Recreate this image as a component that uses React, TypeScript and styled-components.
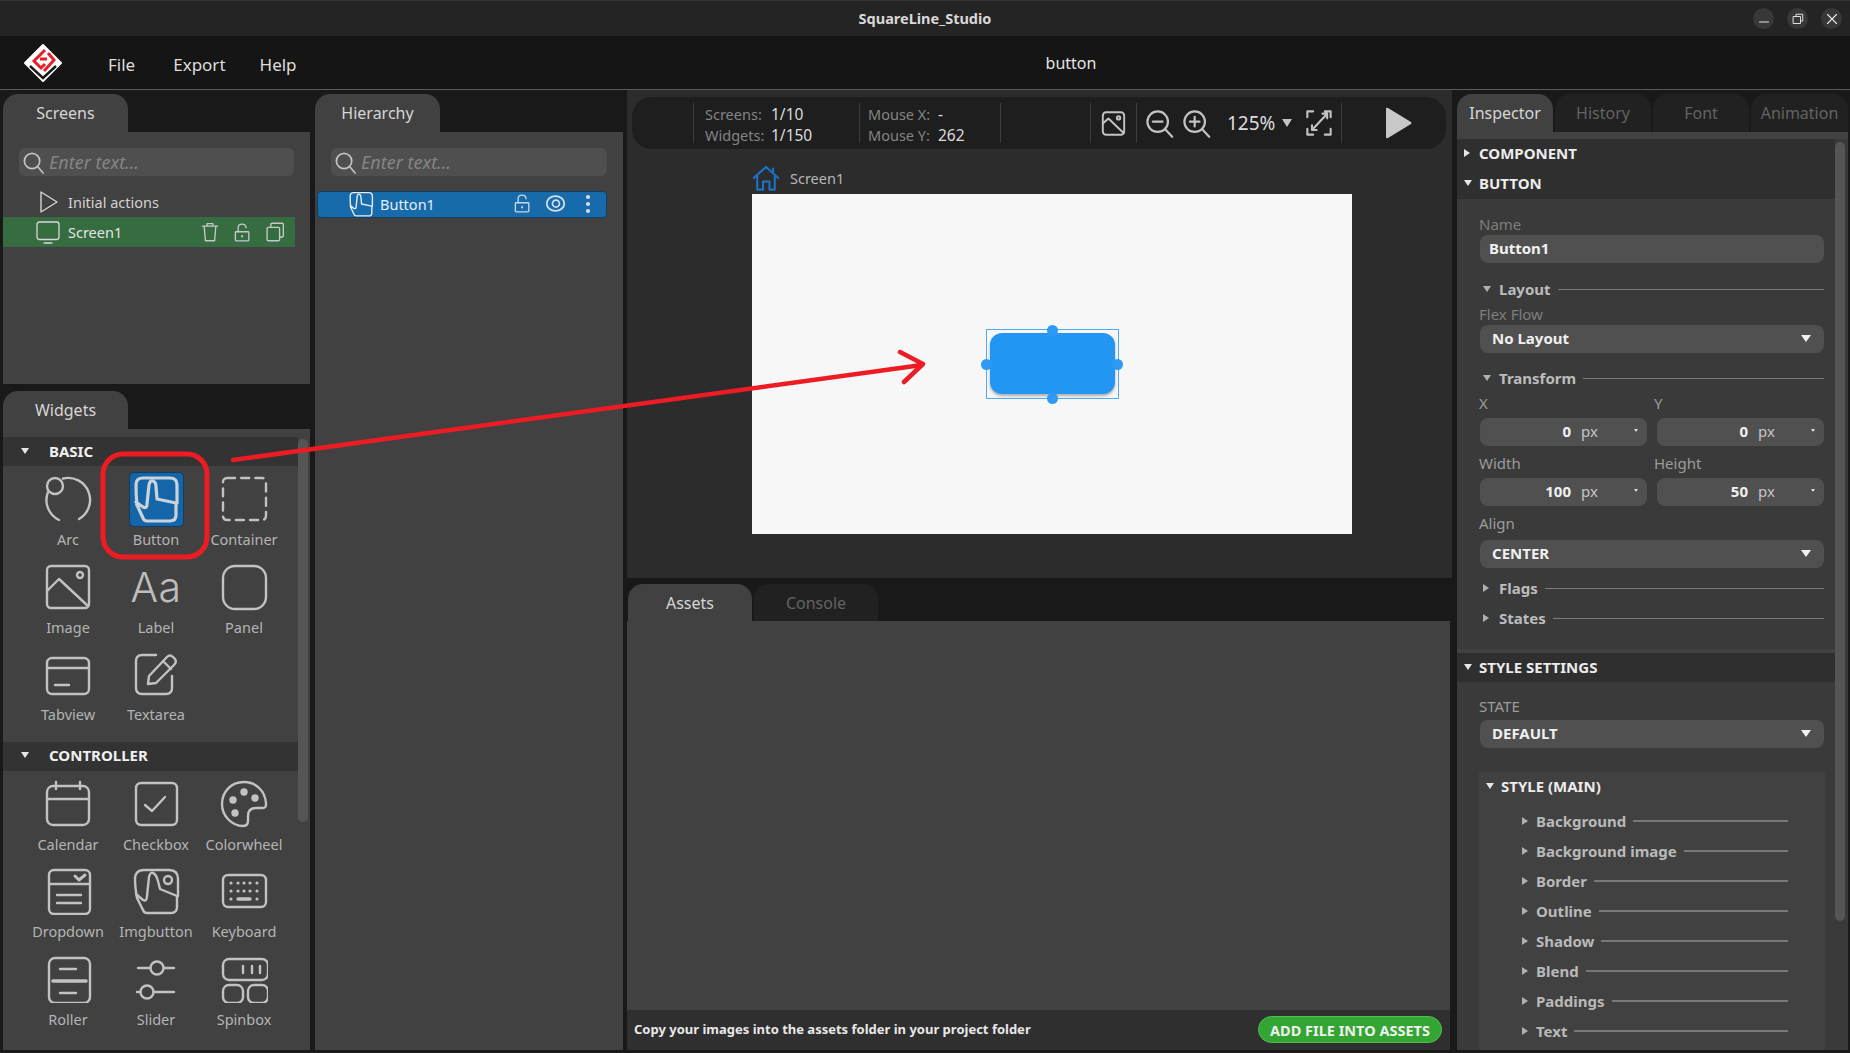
import styled, { createGlobalStyle } from "styled-components";
import type { ReactNode } from "react";

const GlobalStyle = createGlobalStyle`
  html, body {
    margin: 0;
    padding: 0;
    background: #191919;
  }
  * {
    box-sizing: border-box;
  }
  body {
    font-family: "Noto Sans", "Open Sans", sans-serif;
    color: #c8c8c8;
  }
`;

const Page = styled.div`
  position: relative;
  width: 1850px;
  height: 1053px;
  overflow: hidden;
  display: flex;
  flex-direction: column;
  background: #191919;
`;

const TitleBar = styled.div`
  height: 36px;
  display: grid;
  grid-template-columns: 1fr auto 1fr;
  align-items: center;
  background: #242424;
  border-top: 1px solid #333;
`;

const AppTitle = styled.div`
  font-size: 14.5px;
  font-weight: 700;
  color: #d8d8d8;
  padding-bottom: 2px;
`;

const WindowButtons = styled.div`
  display: flex;
  justify-content: flex-end;
  gap: 13px;
  padding-right: 8px;
`;

const WindowButton = styled.div`
  width: 21px;
  height: 21px;
  border-radius: 50%;
  background: #383838;
  display: flex;
  align-items: center;
  justify-content: center;
`;

const MenuBar = styled.div`
  height: 54px;
  display: flex;
  align-items: center;
  background: #151515;
  border-bottom: 1px solid #5a5a5a;
`;

const MenuLeft = styled.div`
  width: 292px;
  flex: none;
  display: flex;
  align-items: center;
  padding-left: 23px;
`;

const LogoMark = styled.svg`
  flex: none;
  display: block;
  margin-top: 2px;
`;

const MenuItem = styled.div<{ $gap: number }>`
  flex: none;
  font-size: 17px;
  color: #dedede;
  padding-top: 3px;
  margin-left: ${(p) => p.$gap}px;
`;

const ProjectName = styled.div`
  flex: 1;
  text-align: center;
  font-size: 16px;
  color: #e4e4e4;
`;

const Main = styled.div`
  flex: 1;
  display: flex;
  padding: 4px 0 3px 3px;
  min-height: 0;
`;

const LeftColumn = styled.div`
  width: 307px;
  display: flex;
  flex-direction: column;
`;

const HierarchyColumn = styled.div`
  width: 308px;
  margin-left: 5px;
  display: flex;
  flex-direction: column;
`;

const CenterColumn = styled.div`
  width: 825px;
  margin: -4px 0 0 4px;
  display: flex;
  flex-direction: column;
`;

const RightColumn = styled.div`
  width: 393px;
  margin-left: 5px;
  display: flex;
  flex-direction: column;
`;

const TabRow = styled.div`
  display: flex;
  height: 38px;
  flex: none;
`;

const Tab = styled.div<{ $active?: boolean; $width: number }>`
  width: ${(p) => p.$width}px;
  margin-right: 2px;
  border-radius: 15px 15px 0 0;
  display: flex;
  align-items: center;
  justify-content: center;
  font-size: 16px;
  background: ${(p) => (p.$active ? "#414141" : "#212121")};
  color: ${(p) => (p.$active ? "#d6d6d6" : "#636363")};
`;

const ScreensBody = styled.div`
  height: 252px;
  background: #414141;
  padding-top: 16px;
`;

const HierarchyBody = styled.div`
  flex: 1;
  background: #414141;
  padding-top: 16px;
`;

const Search = styled.div<{ $left: number; $width: number }>`
  margin-left: ${(p) => p.$left}px;
  width: ${(p) => p.$width}px;
  height: 28px;
  border-radius: 6px;
  background: #4f4f4f;
  display: flex;
  align-items: center;
  padding-left: 3px;
  gap: 4px;
  font-size: 18px;
  font-style: italic;
  color: #858585;
`;

const ListRow = styled.div<{ $selected?: boolean }>`
  height: 30px;
  width: 292px;
  display: flex;
  align-items: center;
  padding-left: 33px;
  font-size: 14.5px;
  background: ${(p) => (p.$selected ? "#366d40" : "transparent")};
  color: ${(p) => (p.$selected ? "#e4e4e4" : "#d2d2d2")};
`;

const ListIcon = styled.div`
  width: 32px;
  flex: none;
  display: flex;
  align-items: center;
`;

const RowActions = styled.div`
  margin-left: auto;
  display: flex;
  align-items: center;
  gap: 13px;
  padding-right: 10px;
`;

const ListSpacer = styled.div`
  height: 11px;
`;

const HierarchyRow = styled.div`
  margin: 15px 0 0 2px;
  width: 290px;
  height: 27px;
  display: flex;
  align-items: center;
  padding: 0 0 2px 30px;
  border-radius: 4px;
  border: 1px solid #123f66;
  background: #186bab;
  font-size: 14.5px;
  color: #e6eef5;
`;

const HierarchyActions = styled.div`
  margin-left: auto;
  display: flex;
  align-items: center;
  gap: 13px;
  padding-right: 15px;
`;

const DotsSlot = styled.div`
  margin-left: 6px;
`;

const WidgetsTabs = styled(TabRow)`
  margin-top: 7px;
`;

const WidgetsBody = styled.div`
  flex: 1;
  display: flex;
  background: #414141;
  padding-top: 8px;
  min-height: 0;
`;

const WidgetsList = styled.div`
  width: 295px;
`;

const Scrollbar = styled.div`
  width: 12px;
  padding-top: 2px;
`;

const ScrollThumb = styled.div<{ $height: number }>`
  width: 10px;
  height: ${(p) => p.$height}px;
  border-radius: 5px;
  background: #555;
`;

const Triangle = styled.span<{ $open?: boolean; $size?: number; $color?: string }>`
  display: inline-block;
  flex: none;
  width: 0;
  height: 0;
  ${(p) => {
    const s = p.$size ?? 4;
    const c = p.$color ?? "#e6e6e6";
    return p.$open
      ? `border-left: ${s}px solid transparent; border-right: ${s}px solid transparent; border-top: ${s * 1.5}px solid ${c};`
      : `border-top: ${s}px solid transparent; border-bottom: ${s}px solid transparent; border-left: ${s * 1.5}px solid ${c};`;
  }}
`;

const TriSlot = styled.div<{ $width: number }>`
  width: ${(p) => p.$width}px;
  flex: none;
  display: flex;
  align-items: center;
`;

const WidgetHeader = styled.div`
  height: 29px;
  display: flex;
  align-items: center;
  background: #333;
  padding: 0 0 2px 18px;
  font-size: 15px;
  font-weight: 700;
  color: #f0f0f0;
`;

const WidgetGrid = styled.div`
  display: grid;
  grid-template-columns: repeat(3, 88px);
  grid-auto-rows: 87.5px;
  padding: 9px 0 4px 21px;
`;

const WidgetCell = styled.div`
  display: flex;
  flex-direction: column;
  align-items: center;
`;

const WidgetIcon = styled.div`
  width: 48px;
  height: 48px;
  display: flex;
  align-items: center;
  justify-content: center;
`;

const ActiveTile = styled.div`
  width: 55px;
  height: 55px;
  flex: none;
  border-radius: 5px;
  border: 1px solid #113d63;
  background: #1565a9;
  display: flex;
  align-items: center;
  justify-content: center;
`;

const BigLetters = styled.div`
  font-family: "Inter", "Roboto", sans-serif;
  font-size: 41px;
  font-weight: 300;
  line-height: 48px;
  letter-spacing: 0.5px;
  color: #bdbdbd;
`;

const WidgetLabel = styled.div`
  margin-top: 6px;
  line-height: 20px;
  font-size: 14.5px;
  color: #b4b4b4;
  white-space: nowrap;
`;

const Workspace = styled.div`
  height: 488px;
  flex: none;
  background: #2c2c2c;
  padding: 7px 6px 0 5px;
`;

const Toolbar = styled.div`
  height: 52px;
  border-radius: 20px;
  background: #1e1e1e;
  display: flex;
  align-items: center;
`;

const ToolSection = styled.div<{ $width: number; $first?: boolean }>`
  width: ${(p) => p.$width}px;
  height: 40px;
  flex: none;
  display: flex;
  align-items: center;
  border-left: ${(p) => (p.$first ? "none" : "1px solid #3c3c3c")};
`;

const CenteredSection = styled(ToolSection)`
  justify-content: center;
`;

const ZoomSection = styled(ToolSection)`
  padding-left: 8px;
  gap: 8px;
`;

const PlaySection = styled(ToolSection)`
  padding-left: 42px;
`;

const StatSection = styled(ToolSection)`
  flex-direction: column;
  align-items: flex-start;
  justify-content: center;
  padding: 3px 0 0 ${(p) => (p.$width > 150 ? 11 : 8)}px;
`;

const StatLine = styled.div`
  display: flex;
  align-items: baseline;
  line-height: 21px;
  font-size: 14.5px;
`;

const StatLabel = styled.span<{ $width: number }>`
  width: ${(p) => p.$width}px;
  color: #848484;
`;

const StatValue = styled.span`
  font-size: 15.5px;
  color: #dcdcdc;
`;

const ZoomText = styled.span`
  font-size: 19px;
  color: #dcdcdc;
  margin: 0 -1px 0 8px;
`;

const ZoomCaret = styled.div`
  display: flex;
  margin-right: 5px;
`;

const ScreenHeader = styled.div`
  display: flex;
  align-items: center;
  height: 26px;
  margin: 15px 0 0 120px;
  gap: 10px;
  font-size: 14.5px;
  color: #b8b8b8;
  padding-top: 1px;
`;

const Canvas = styled.div`
  width: 600px;
  height: 340px;
  margin: 4px 0 0 120px;
  background: #f7f7f7;
  display: flex;
  align-items: center;
  justify-content: center;
`;

const Selection = styled.div`
  position: relative;
  width: 133px;
  height: 70px;
  padding: 3px 3px 4px;
  border: 1.5px solid #4ea9f6;
`;

const CanvasButton = styled.div`
  width: 100%;
  height: 100%;
  border-radius: 12px;
  background: #2196f3;
  box-shadow: 0 2px 3px rgba(0, 0, 0, 0.3);
`;

const Handle = styled.div<{ $x: string; $y: string }>`
  position: absolute;
  left: ${(p) => p.$x};
  top: ${(p) => p.$y};
  width: 11px;
  height: 11px;
  margin: -5.5px 0 0 -5.5px;
  border-radius: 50%;
  background: #2e9af5;
`;

const AssetTabs = styled(TabRow)`
  padding: 6px 0 0 1px;
  height: 43px;
`;

const AssetBody = styled.div`
  flex: 1;
  width: 823px;
  display: flex;
  flex-direction: column;
  background: #414141;
`;

const AssetContent = styled.div`
  flex: 1;
`;

const AssetFooter = styled.div`
  height: 40px;
  background: #2f2f2f;
  display: flex;
  align-items: center;
  justify-content: space-between;
  padding: 0 8px 0 7px;
  font-size: 13px;
  font-weight: 700;
  color: #e8e8e8;
`;

const FooterText = styled.div`
  margin-top: -2px;
`;

const GreenButton = styled.div`
  width: 184px;
  height: 27px;
  margin-top: -1px;
  border-radius: 14px;
  border: 1px solid #4ec14d;
  background: #33a532;
  display: flex;
  align-items: center;
  justify-content: center;
  font-size: 14.5px;
  color: #f0f0f0;
`;

const InspectorTabs = styled(TabRow)`
  width: 393px;
`;

const InspectorBody = styled.div`
  flex: 1;
  width: 391px;
  display: flex;
  padding-top: 7px;
  background: #414141;
  min-height: 0;
`;

const InspectorScroll = styled.div`
  width: 378px;
  background: #3a3a3a;
  overflow: hidden;
`;

const InspectorTrack = styled.div`
  width: 13px;
  padding-top: 3px;
  background: #3a3a3a;
`;

const SectionHeader = styled.div<{ $height?: number }>`
  height: ${(p) => p.$height ?? 30}px;
  display: flex;
  align-items: center;
  padding: 0 0 2px 7px;
  background: #2f2f2f;
  font-size: 15px;
  font-weight: 700;
  color: #ececec;
`;

const SectionBand = styled.div`
  margin-top: 20px;
  border-top: 4px solid #414141;
`;

const Form = styled.div`
  padding: 0 11px 0 22px;
`;

const FieldLabel = styled.div<{ $top: number; $dim?: boolean }>`
  margin-top: ${(p) => p.$top}px;
  height: 20px;
  line-height: 18px;
  font-size: 15px;
  color: ${(p) => (p.$dim ? "#7e7e7e" : "#9c9c9c")};
`;

const TextField = styled.div<{ $top?: number }>`
  margin: ${(p) => p.$top ?? 0}px 0 0 1px;
  height: 28px;
  border-radius: 8px;
  background: #505050;
  display: flex;
  align-items: center;
  padding: 0 0 2px 9px;
  font-size: 15px;
  font-weight: 700;
  color: #f0f0f0;
`;

const SelectField = styled(TextField)`
  justify-content: space-between;
  padding: 0 13px 2px 12px;
`;

const SubHeader = styled.div<{ $top: number }>`
  margin: ${(p) => p.$top}px 0 0 4px;
  height: 20px;
  display: flex;
  align-items: center;
  padding-bottom: 2px;
  font-size: 15px;
  font-weight: 700;
  color: #bcbcbc;
`;

const Rule = styled.div<{ $thick?: boolean }>`
  flex: 1;
  height: ${(p) => (p.$thick ? 2 : 1)}px;
  margin-left: 7px;
  background: ${(p) => (p.$thick ? "#787878" : "#7a7a7a")};
`;

const TwoColumns = styled.div`
  display: grid;
  grid-template-columns: 167px 167px;
  column-gap: 10px;
  margin-left: 1px;
`;

const ColumnLabels = styled(TwoColumns)`
  margin-left: 0;
  column-gap: 9px;
  grid-template-columns: 166px 170px;
`;

const NumberField = styled.div<{ $top: number }>`
  margin-top: ${(p) => p.$top}px;
  height: 28px;
  border-radius: 8px;
  background: #505050;
  display: flex;
  align-items: center;
  padding-bottom: 2px;
  font-size: 15px;
`;

const NumberValue = styled.span`
  width: 91px;
  text-align: right;
  font-weight: 700;
  color: #f0f0f0;
`;

const NumberUnit = styled.span`
  margin-left: 10px;
  color: #c4c4c4;
`;

const NumberCaret = styled.span`
  margin-left: auto;
  margin-right: 9px;
  margin-top: -2px;
  display: flex;
`;

const StyleBox = styled.div`
  margin: 24px 10px 0 22px;
  height: 278px;
  background: #414141;
  padding-top: 5px;
`;

const StyleTitle = styled.div`
  height: 20px;
  display: flex;
  align-items: center;
  padding: 0 0 2px 7px;
  font-size: 15px;
  font-weight: 700;
  color: #ececec;
`;

const StyleItem = styled.div`
  height: 30px;
  display: flex;
  align-items: center;
  margin: 0 37px 0 43px;
  padding-bottom: 2px;
  font-size: 15px;
  font-weight: 700;
  color: #b9b9b9;
`;

const StyleItems = styled.div`
  margin-top: 10px;
`;

const AnnotationLayer = styled.svg`
  position: absolute;
  left: 0;
  top: 0;
  pointer-events: none;
`;

const Line = styled.svg`
  display: block;
  flex: none;
  fill: none;
  stroke: ${(p) => p.color ?? "#c2c2c2"};
  stroke-linecap: round;
  stroke-linejoin: round;
`;

type IconProps = {
  size?: number;
  color?: string;
  stroke?: number;
  children: ReactNode;
};

const Icon = ({ size = 48, color, stroke = 2.4, children }: IconProps) => (
  <Line
    width={size}
    height={size}
    viewBox="0 0 48 48"
    color={color}
    style={{ strokeWidth: stroke }}
  >
    {children}
  </Line>
);

const handPath =
  "M4 27 L11 32 Q15 34 15 29 L17 10 Q18 5 21 6 Q24 7 24 12 L25 24 L44 28 V40 Q44 46 38 46 H15 Q12 46 11 43 L5 30";

const ArcIcon = (
  <>
    <circle cx="11" cy="11" r="8" />
    <path d="M19 3.5 A22 22 0 0 1 35 44" />
    <path d="M4 17 A22 22 0 0 0 15 45" />
  </>
);

const ButtonIcon = (
  <>
    <path d="M5 30 Q4 20 4 10 Q4 3 11 3 H38 Q45 3 45 10 V28" />
    <path d={handPath} />
  </>
);

const ContainerIcon = (
  <rect x="3" y="3" width="43" height="42" rx="4" strokeDasharray="8 6.2" />
);

const ImageIcon = (
  <>
    <rect x="3" y="3" width="42" height="42" rx="4" />
    <path d="M3 28 L15 16 L44 43" />
    <circle cx="36" cy="12" r="3" />
  </>
);

const PanelIcon = <rect x="3" y="3" width="43" height="43" rx="12" />;

const TabviewIcon = (
  <>
    <rect x="3" y="8" width="42" height="36" rx="5" />
    <path d="M3 18 H45 M11 35 H25" />
  </>
);

const TextareaIcon = (
  <>
    <path d="M24 5 H10 Q4 5 4 11 V38 Q4 44 10 44 H34 Q40 44 40 38 V26" />
    <path d="M16 34 L17 26 L35 7 Q38 4 41 7 L43 9 Q45 12 42 15 L24 33 Z M31 11 L39 19" />
  </>
);

const CalendarIcon = (
  <>
    <rect x="3" y="6" width="42" height="39" rx="6" />
    <path d="M3 19 H45 M12 2 V9 M36 2 V9" />
  </>
);

const CheckboxIcon = (
  <>
    <rect x="4" y="3" width="41" height="42" rx="5" />
    <path d="M13 25 L20 31 L33 17" />
  </>
);

const ColorwheelIcon = (
  <>
    <path d="M24 2 C10 2 2 13 2 24 C2 36 12 46 23 46 C29 46 28 41 28 36 C28 31 31 28 36 28 H43 C46 28 46 26 46 23 C45 11 36 2 24 2 Z" />
    <circle cx="13" cy="20" r="2.5" fill="#c2c2c2" />
    <circle cx="24" cy="12" r="2.5" fill="#c2c2c2" />
    <circle cx="35" cy="18" r="2.5" fill="#c2c2c2" />
    <circle cx="15" cy="33" r="2.5" fill="#c2c2c2" />
  </>
);

const DropdownIcon = (
  <>
    <rect x="5" y="3" width="41" height="44" rx="5" />
    <path d="M5 17 H46 M13 28 H37 M13 36 H37" />
    <path d="M31 9 L35 13 L41 8" strokeWidth="3" />
  </>
);

const ImgbuttonIcon = (
  <>
    <path d="M5 31 Q3 20 3 12 Q3 3 12 3 H37 Q46 3 46 12 V29" />
    <path d="M4 27 L11 33 Q15 35 15 29 L17 10 Q18 5 21 6 Q24 7 26 14 L28 22 L45 29 V40 Q45 46 39 46 H15 Q12 46 11 43 L5 31" />
    <circle cx="36" cy="13" r="4" />
  </>
);

const KeyboardIcon = (
  <>
    <rect x="3" y="8" width="43" height="32" rx="5" />
    <path
      d="M11 16 V16 M18 16 V16 M24 16 V16 M30 16 V16 M37 16 V16 M11 24 V24 M18 24 V24 M24 24 V24 M30 24 V24 M37 24 V24 M11 32 V32 M37 32 V32"
      strokeWidth="3.2"
    />
    <path d="M18 32 H30" strokeWidth="3.4" />
  </>
);

const RollerIcon = (
  <>
    <rect x="5" y="3" width="41" height="45" rx="6" />
    <path d="M16 14 H32 M16 38 H32" />
    <path d="M9 26 H42" strokeWidth="3.6" />
  </>
);

const SliderIcon = (
  <>
    <circle cx="25" cy="13" r="6.5" />
    <circle cx="15" cy="37" r="6.5" />
    <path d="M6 13 H18 M32 13 H42 M5 37 H8 M22 37 H42" />
  </>
);

const SpinboxIcon = (
  <>
    <rect x="3" y="4" width="45" height="21" rx="6" />
    <rect x="3" y="30" width="20" height="18" rx="6" />
    <rect x="28" y="30" width="20" height="18" rx="6" />
    <path d="M23 11 V18 M32 11 V18 M40 11 V18" />
  </>
);

const SearchIcon = () => (
  <Icon size={23} stroke={3.6}>
    <circle cx="21" cy="21" r="16" />
    <path d="M33 33 L44 46" />
  </Icon>
);

const UnlockIcon = ({ size = 19, color = "#c8c8c8" }: { size?: number; color?: string }) => (
  <Icon size={size} stroke={3.4} color={color}>
    <rect x="6" y="22" width="34" height="23" rx="2" />
    <path d="M13 22 V12 Q13 3 23 3 Q32 3 33 12" />
    <path d="M23 33 V34" strokeWidth="5" />
  </Icon>
);

const TrashIcon = () => (
  <Icon size={20} stroke={3.2} color="#c8c8c8">
    <path d="M6 10 H42 M17 10 V4 H31 V10 M10 10 L13 45 H35 L38 10" />
  </Icon>
);

const CopyIcon = () => (
  <Icon size={20} stroke={3.2} color="#c8c8c8">
    <rect x="5" y="13" width="30" height="32" rx="3" />
    <path d="M14 12 V6 Q14 3 17 3 H41 Q44 3 44 6 V33 Q44 36 41 36 H36" />
  </Icon>
);

const EyeIcon = () => (
  <Icon size={21} stroke={4} color="#d4dfe8">
    <ellipse cx="24" cy="24" rx="20" ry="17" />
    <circle cx="25" cy="24" r="8" />
  </Icon>
);

const DotsIcon = () => (
  <Line width={6} height={20} viewBox="0 0 6 20" style={{ stroke: "none" }}>
    <circle cx="3" cy="3" r="2.1" fill="#d4dfe8" />
    <circle cx="3" cy="10" r="2.1" fill="#d4dfe8" />
    <circle cx="3" cy="17" r="2.1" fill="#d4dfe8" />
  </Line>
);

const Logo = () => (
  <LogoMark width="40" height="42" viewBox="0 0 40 42">
    <path d="M20 2 L38 20 L20 38 L2 20 Z" fill="#fff" stroke="#fff" strokeWidth="2" strokeLinejoin="round" />
    <path d="M7 23 L20 35 L33 23" fill="none" stroke="#1a1a1a" strokeWidth="2.4" />
    <path
      d="M22 7 L11 18 L18 25 L22 21 M17 16 H24 M25 10 L31 17 L21 28"
      fill="none"
      stroke="#e3202a"
      strokeWidth="3"
    />
  </LogoMark>
);

type WidgetDef = { label: string; icon?: ReactNode; active?: boolean; letters?: boolean };

const basicWidgets: WidgetDef[] = [
  { label: "Arc", icon: ArcIcon },
  { label: "Button", icon: ButtonIcon, active: true },
  { label: "Container", icon: ContainerIcon },
  { label: "Image", icon: ImageIcon },
  { label: "Label", letters: true },
  { label: "Panel", icon: PanelIcon },
  { label: "Tabview", icon: TabviewIcon },
  { label: "Textarea", icon: TextareaIcon },
];

const controllerWidgets: WidgetDef[] = [
  { label: "Calendar", icon: CalendarIcon },
  { label: "Checkbox", icon: CheckboxIcon },
  { label: "Colorwheel", icon: ColorwheelIcon },
  { label: "Dropdown", icon: DropdownIcon },
  { label: "Imgbutton", icon: ImgbuttonIcon },
  { label: "Keyboard", icon: KeyboardIcon },
  { label: "Roller", icon: RollerIcon },
  { label: "Slider", icon: SliderIcon },
  { label: "Spinbox", icon: SpinboxIcon },
];

const styleItems = [
  "Background",
  "Background image",
  "Border",
  "Outline",
  "Shadow",
  "Blend",
  "Paddings",
  "Text",
];

const WidgetTile = ({ widget }: { widget: WidgetDef }) => (
  <WidgetCell>
    <WidgetIcon>
      {widget.letters && <BigLetters>Aa</BigLetters>}
      {widget.icon && !widget.active && <Icon>{widget.icon}</Icon>}
      {widget.active && (
        <ActiveTile>
          <Icon stroke={3.2} color="#c9d3dc">
            {widget.icon}
          </Icon>
        </ActiveTile>
      )}
    </WidgetIcon>
    <WidgetLabel>{widget.label}</WidgetLabel>
  </WidgetCell>
);

const FoldRow = ({ label, top, open }: { label: string; top: number; open?: boolean }) => (
  <SubHeader $top={top}>
    <TriSlot $width={16}>
      <Triangle $open={open} $color="#b0b0b0" />
    </TriSlot>
    <div>{label}</div>
    <Rule />
  </SubHeader>
);

const PxField = ({ value, top }: { value: number; top: number }) => (
  <NumberField $top={top}>
    <NumberValue>{value}</NumberValue>
    <NumberUnit>px</NumberUnit>
    <NumberCaret>
      <Triangle $open $size={2.5} $color="#ddd" />
    </NumberCaret>
  </NumberField>
);

const Select = ({ value, top }: { value: string; top?: number }) => (
  <SelectField $top={top}>
    {value}
    <Triangle $open $size={5} $color="#f0f0f0" />
  </SelectField>
);

const WidgetSection = ({ title, widgets }: { title: string; widgets: WidgetDef[] }) => (
  <>
    <WidgetHeader>
      <TriSlot $width={28}>
        <Triangle $open $size={4.5} />
      </TriSlot>
      <div>{title}</div>
    </WidgetHeader>
    <WidgetGrid>
      {widgets.map((w) => (
        <WidgetTile key={w.label} widget={w} />
      ))}
    </WidgetGrid>
  </>
);

export default function App() {
  return (
    <Page>
      <GlobalStyle />
      <TitleBar>
        <div />
        <AppTitle>SquareLine_Studio</AppTitle>
        <WindowButtons>
          <WindowButton>
            <Icon size={12} stroke={4} color="#e0e0e0">
              <path d="M6 36 H42" />
            </Icon>
          </WindowButton>
          <WindowButton>
            <Icon size={12} stroke={4} color="#e0e0e0">
              <rect x="6" y="14" width="28" height="28" />
              <path d="M16 14 V5 H43 V32 H34" />
            </Icon>
          </WindowButton>
          <WindowButton>
            <Icon size={12} stroke={4.5} color="#e8e8e8">
              <path d="M6 6 L42 42 M42 6 L6 42" />
            </Icon>
          </WindowButton>
        </WindowButtons>
      </TitleBar>
      <MenuBar>
        <MenuLeft>
          <Logo />
          <MenuItem $gap={45}>File</MenuItem>
          <MenuItem $gap={38}>Export</MenuItem>
          <MenuItem $gap={34}>Help</MenuItem>
        </MenuLeft>
        <ProjectName>button</ProjectName>
      </MenuBar>
      <Main>
        <LeftColumn>
          <TabRow>
            <Tab $active $width={125}>
              Screens
            </Tab>
          </TabRow>
          <ScreensBody>
            <Search $left={16} $width={275}>
              <SearchIcon />
              Enter text...
            </Search>
            <ListSpacer />
            <ListRow>
              <ListIcon>
                <Icon size={24} stroke={2.8} color="#d4d4d4">
                  <path d="M10 4 L42 24 L10 44 Z" />
                </Icon>
              </ListIcon>
              Initial actions
            </ListRow>
            <ListRow $selected>
              <ListIcon>
                <Icon size={24} stroke={2.6} color="#d8d8d8">
                  <rect x="2" y="4" width="44" height="35" rx="5" />
                  <path d="M16 46 H32" />
                </Icon>
              </ListIcon>
              Screen1
              <RowActions>
                <TrashIcon />
                <UnlockIcon />
                <CopyIcon />
              </RowActions>
            </ListRow>
          </ScreensBody>
          <WidgetsTabs>
            <Tab $active $width={125}>
              Widgets
            </Tab>
          </WidgetsTabs>
          <WidgetsBody>
            <WidgetsList>
              <WidgetSection title="BASIC" widgets={basicWidgets} />
              <WidgetSection title="CONTROLLER" widgets={controllerWidgets} />
            </WidgetsList>
            <Scrollbar>
              <ScrollThumb $height={383} />
            </Scrollbar>
          </WidgetsBody>
        </LeftColumn>
        <HierarchyColumn>
          <TabRow>
            <Tab $active $width={125}>
              Hierarchy
            </Tab>
          </TabRow>
          <HierarchyBody>
            <Search $left={16} $width={276}>
              <SearchIcon />
              Enter text...
            </Search>
            <HierarchyRow>
              <ListIcon>
                <Icon size={26} stroke={2.6} color="#e2ebf3">
                  {ButtonIcon}
                </Icon>
              </ListIcon>
              Button1
              <HierarchyActions>
                <UnlockIcon color="#c9d6e2" />
                <EyeIcon />
                <DotsSlot>
                  <DotsIcon />
                </DotsSlot>
              </HierarchyActions>
            </HierarchyRow>
          </HierarchyBody>
        </HierarchyColumn>
        <CenterColumn>
          <Workspace>
            <Toolbar>
              <ToolSection $first $width={61} />
              <StatSection $width={166}>
                <StatLine>
                  <StatLabel $width={66}>Screens:</StatLabel>
                  <StatValue>1/10</StatValue>
                </StatLine>
                <StatLine>
                  <StatLabel $width={66}>Widgets:</StatLabel>
                  <StatValue>1/150</StatValue>
                </StatLine>
              </StatSection>
              <StatSection $width={141}>
                <StatLine>
                  <StatLabel $width={70}>Mouse X:</StatLabel>
                  <StatValue>-</StatValue>
                </StatLine>
                <StatLine>
                  <StatLabel $width={70}>Mouse Y:</StatLabel>
                  <StatValue>262</StatValue>
                </StatLine>
              </StatSection>
              <ToolSection $width={90} />
              <CenteredSection $width={46}>
                <Icon size={27} stroke={3.4} color="#c4c4c4">
                  <rect x="5" y="4" width="38" height="40" rx="6" />
                  <path d="M5 24 L15 15 L42 41" />
                  <circle cx="33" cy="14" r="3" />
                </Icon>
              </CenteredSection>
              <ZoomSection $width={205}>
                <Icon size={29} stroke={3.6}>
                  <circle cx="21" cy="21" r="17" />
                  <path d="M33 33 L45 46 M13 21 H29" />
                </Icon>
                <Icon size={29} stroke={3.6}>
                  <circle cx="21" cy="21" r="17" />
                  <path d="M33 33 L45 46 M13 21 H29 M21 13 V29" />
                </Icon>
                <ZoomText>125%</ZoomText>
                <ZoomCaret>
                  <Triangle $open $size={5.5} $color="#c4c4c4" />
                </ZoomCaret>
                <Icon size={28} stroke={3.6}>
                  <path d="M14 4 H4 V14 M34 4 H44 V14 M14 44 H4 V34 M34 44 H44 V34 M12 36 L38 8 M38 8 H30 M38 8 V16 M12 36 H20 M12 36 V28" />
                </Icon>
              </ZoomSection>
              <PlaySection $width={104}>
                <Line width={28} height={32} viewBox="0 0 28 32" style={{ stroke: "none" }}>
                  <path
                    d="M2 2 Q2 0 4 1 L27 15 Q28 16 27 17 L4 31 Q2 32 2 30 Z"
                    fill="#c8c8c8"
                  />
                </Line>
              </PlaySection>
            </Toolbar>
            <ScreenHeader>
              <Icon size={28} stroke={3.6} color="#1a73c8">
                <path d="M3 24 L24 5 L45 24 M9 20 V44 H19 V30 H30 V44 H39 V20 M36 8 V14" />
              </Icon>
              Screen1
            </ScreenHeader>
            <Canvas>
              <Selection>
                <CanvasButton />
                <Handle $x="50%" $y="0%" />
                <Handle $x="50%" $y="100%" />
                <Handle $x="0%" $y="50%" />
                <Handle $x="100%" $y="50%" />
              </Selection>
            </Canvas>
          </Workspace>
          <AssetTabs>
            <Tab $active $width={124}>
              Assets
            </Tab>
            <Tab $width={124}>Console</Tab>
          </AssetTabs>
          <AssetBody>
            <AssetContent />
            <AssetFooter>
              <FooterText>Copy your images into the assets folder in your project folder</FooterText>
              <GreenButton>ADD FILE INTO ASSETS</GreenButton>
            </AssetFooter>
          </AssetBody>
        </CenterColumn>
        <RightColumn>
          <InspectorTabs>
            <Tab $active $width={96}>
              Inspector
            </Tab>
            <Tab $width={96}>History</Tab>
            <Tab $width={96}>Font</Tab>
            <Tab $width={97}>Animation</Tab>
          </InspectorTabs>
          <InspectorBody>
            <InspectorScroll>
              <SectionHeader>
                <TriSlot $width={15}>
                  <Triangle />
                </TriSlot>
                COMPONENT
              </SectionHeader>
              <SectionHeader>
                <TriSlot $width={15}>
                  <Triangle $open />
                </TriSlot>
                BUTTON
              </SectionHeader>
              <Form>
                <FieldLabel $top={16} $dim>
                  Name
                </FieldLabel>
                <TextField>Button1</TextField>
                <FoldRow label="Layout" top={17} open />
                <FieldLabel $top={5} $dim>
                  Flex Flow
                </FieldLabel>
                <Select value="No Layout" />
                <FoldRow label="Transform" top={16} open />
                <ColumnLabels>
                  <FieldLabel $top={5}>X</FieldLabel>
                  <FieldLabel $top={5}>Y</FieldLabel>
                </ColumnLabels>
                <TwoColumns>
                  <PxField value={0} top={4} />
                  <PxField value={0} top={4} />
                </TwoColumns>
                <ColumnLabels>
                  <FieldLabel $top={8}>Width</FieldLabel>
                  <FieldLabel $top={8}>Height</FieldLabel>
                </ColumnLabels>
                <TwoColumns>
                  <PxField value={100} top={4} />
                  <PxField value={50} top={4} />
                </TwoColumns>
                <FieldLabel $top={8}>Align</FieldLabel>
                <Select value="CENTER" top={6} />
                <FoldRow label="Flags" top={11} />
                <FoldRow label="States" top={10} />
              </Form>
              <SectionBand>
                <SectionHeader $height={29}>
                  <TriSlot $width={15}>
                    <Triangle $open />
                  </TriSlot>
                  STYLE SETTINGS
                </SectionHeader>
              </SectionBand>
              <Form>
                <FieldLabel $top={15}>STATE</FieldLabel>
                <Select value="DEFAULT" top={3} />
              </Form>
              <StyleBox>
                <StyleTitle>
                  <TriSlot $width={15}>
                    <Triangle $open />
                  </TriSlot>
                  STYLE (MAIN)
                </StyleTitle>
                <StyleItems>
                  {styleItems.map((item) => (
                    <StyleItem key={item}>
                      <TriSlot $width={14}>
                        <Triangle $color="#b0b0b0" />
                      </TriSlot>
                      <div>{item}</div>
                      <Rule $thick />
                    </StyleItem>
                  ))}
                </StyleItems>
              </StyleBox>
            </InspectorScroll>
            <InspectorTrack>
              <ScrollThumb $height={779} />
            </InspectorTrack>
          </InspectorBody>
        </RightColumn>
      </Main>
      <AnnotationLayer width="1850" height="1053" viewBox="0 0 1850 1053">
        <rect x="103" y="454" width="104" height="103" rx="20" fill="none" stroke="#ed1c24" strokeWidth="5" />
        <path
          d="M233 460 L922 365 M900 352 L923 364 L904 382"
          fill="none"
          stroke="#ed1c24"
          strokeWidth="4.5"
          strokeLinecap="round"
          strokeLinejoin="round"
        />
      </AnnotationLayer>
    </Page>
  );
}
